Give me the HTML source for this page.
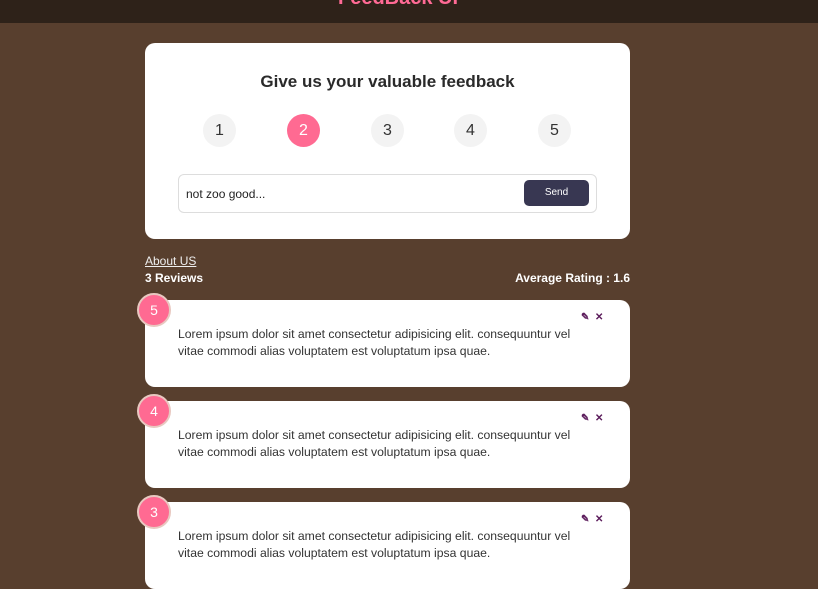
<!DOCTYPE html>
<html><head><meta charset="utf-8"><style>
*{margin:0;padding:0;box-sizing:border-box}
body{width:818px;height:578px;overflow:hidden;background:#583f2e;font-family:"Liberation Sans",sans-serif;position:relative}
.hdr{position:absolute;left:0;top:0;width:818px;height:23px;background:#2e2219;overflow:hidden}
.hdr span{position:absolute;left:338px;top:-13px;color:#ff6a95;font-weight:bold;font-size:20px}
.card{position:absolute;left:145px;width:485px;background:#fff;border-radius:10px}
h2{position:absolute;top:29px;width:100%;text-align:center;font-size:17px;color:#2a2a2a;font-weight:bold}
.n{position:absolute;top:71px;width:33px;height:33px;border-radius:50%;background:#f3f3f3;color:#333;font-size:16px;text-align:center;line-height:33px}
.n.a{background:#ff6a92;color:#fff}
.inp{position:absolute;left:33px;top:131px;width:419px;height:39px;border:1px solid #ddd;border-radius:6px}
.inp span{position:absolute;left:7px;top:12px;font-size:12px;color:#222}
.btn{position:absolute;left:345px;top:5px;width:65px;height:26px;background:#383752;border-radius:5px;color:#fff;font-size:10px;text-align:center;line-height:26px}
.lbl{position:absolute;color:#fff;font-size:12px}
.rv{height:87px}
.rv p{position:absolute;left:33px;top:26px;width:405px;font-size:12.2px;line-height:17px;color:#333}
.bd{position:absolute;left:-8px;top:-7px;width:34px;height:34px;border-radius:50%;background:#ff6a92;border:2px solid #e8c8c0;color:#fff;font-size:14px;text-align:center;line-height:30px}
.ic{position:absolute;top:12px;font-size:10px;color:#5a1a5a;font-weight:bold}
</style></head><body>
<div class="hdr"><span>FeedBack UI</span></div>
<div class="card" style="top:43px;height:196px">
<h2>Give us your valuable feedback</h2>
<div class="n" style="left:58px">1</div><div class="n a" style="left:142px">2</div><div class="n" style="left:226px">3</div><div class="n" style="left:309px">4</div><div class="n" style="left:393px">5</div>
<div class="inp"><span>not zoo good...</span><div class="btn">Send</div></div>
</div>
<div class="lbl" style="left:145px;top:254px;text-decoration:underline;color:#eee">About US</div>
<div class="lbl" style="left:145px;top:271px;font-weight:bold">3 Reviews</div>
<div class="lbl" style="right:188px;top:271px;font-weight:bold">Average Rating : 1.6</div>
<div class="card rv" style="top:300px"><div class="bd">5</div><span class="ic" style="left:436px">&#9998;</span><span class="ic" style="left:450px">&#10005;</span><p>Lorem ipsum dolor sit amet consectetur adipisicing elit. consequuntur vel vitae commodi alias voluptatem est voluptatum ipsa quae.</p></div>
<div class="card rv" style="top:401px"><div class="bd">4</div><span class="ic" style="left:436px">&#9998;</span><span class="ic" style="left:450px">&#10005;</span><p>Lorem ipsum dolor sit amet consectetur adipisicing elit. consequuntur vel vitae commodi alias voluptatem est voluptatum ipsa quae.</p></div>
<div class="card rv" style="top:502px"><div class="bd">3</div><span class="ic" style="left:436px">&#9998;</span><span class="ic" style="left:450px">&#10005;</span><p>Lorem ipsum dolor sit amet consectetur adipisicing elit. consequuntur vel vitae commodi alias voluptatem est voluptatum ipsa quae.</p></div>
</body></html>
